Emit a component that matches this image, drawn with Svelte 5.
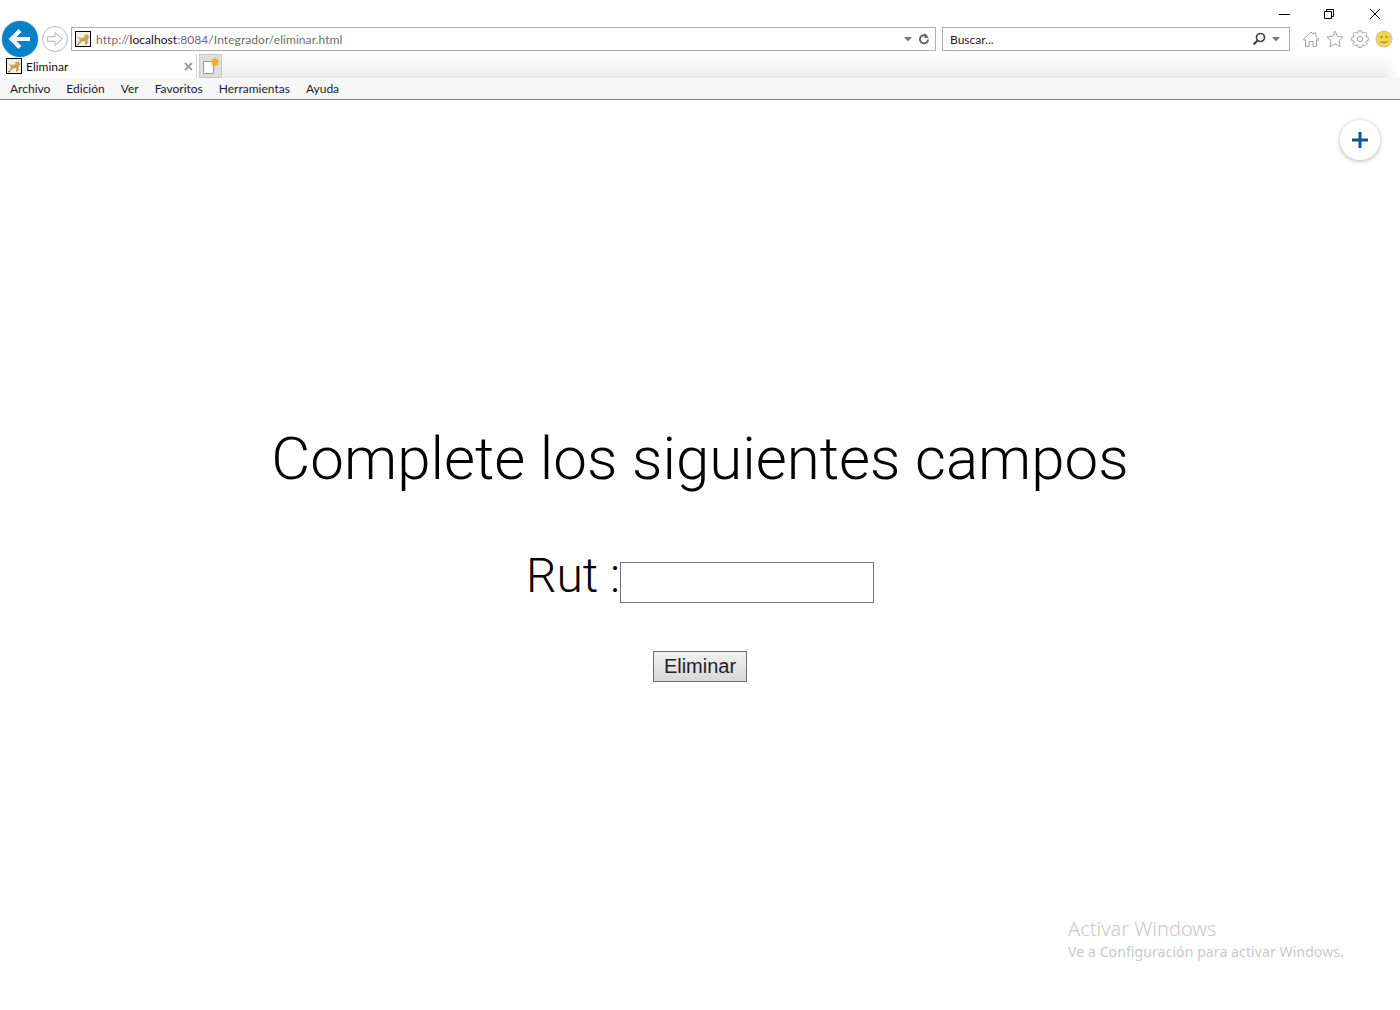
<script>
  const menu = ['Archivo', 'Edición', 'Ver', 'Favoritos', 'Herramientas', 'Ayuda'];

  // Outline of an eight-toothed cog, centred in an 18-unit box.
  function cogPath() {
    const teeth = 8;
    const pts = [];
    for (let i = 0; i < teeth; i++) {
      const a = (i / teeth) * Math.PI * 2;
      const step = (Math.PI * 2) / teeth;
      [[-0.5, 6.2], [-0.24, 8.4], [0.24, 8.4], [0.5, 6.2]].forEach(([f, r]) => {
        const t = a + f * step;
        pts.push(`${(9 + r * Math.cos(t)).toFixed(2)} ${(9 + r * Math.sin(t)).toFixed(2)}`);
      });
    }
    return 'M' + pts.join('L') + 'Z';
  }
  const cog = cogPath();
</script>

{#snippet cat()}
  <svg class="fav" viewBox="0 0 16 16" aria-hidden="true">
    <rect x="0.5" y="0.5" width="15" height="15" fill="#f1efe8" stroke="#000" />
    <path d="M2 5 L5 7 L9 6.500 L10 3 L11.500 4.500 L13 3 L14 7 L12.500 9 L13 12 L11 12 L9.500 10 L7 10.500 L4 13 L3 12 L5 9.500 L4 7.500 Z" fill="#cda257" />
    <path d="M2 14 L4 13 M10 13 L12 12.500" stroke="#7a6238" stroke-width="1" fill="none" />
  </svg>
{/snippet}

<div class="page">
  <header class="chrome">
    <div class="winbar">
      <svg class="winbtn min" viewBox="0 0 12 12" aria-hidden="true"><path d="M1 6.500h11" stroke="#000" fill="none" /></svg>
      <svg class="winbtn restore" viewBox="0 0 12 12" aria-hidden="true"><path d="M1.500 3.500h7v7h-7z M3.500 3.500v-2h7v7h-2" stroke="#000" fill="none" /></svg>
      <svg class="winbtn close" viewBox="0 0 12 12" aria-hidden="true"><path d="M1 1l10 10M11 1L1 11" stroke="#000" fill="none" /></svg>
    </div>

    <div class="navrow">
      <div class="back">
        <svg viewBox="0 0 36 36" aria-hidden="true"><path d="M28 18H10M18 9.500L9.500 18l8.500 8.500" stroke="#fff" stroke-width="4" fill="none" /></svg>
      </div>
      <div class="forward">
        <svg viewBox="0 0 26 26" aria-hidden="true"><path d="M5 10.500h8V6l8 7-8 7v-4.500H5z" stroke="#aaa" stroke-width="1" fill="#fff" /></svg>
      </div>
      <div class="address">
        {@render cat()}
        <span class="url">http://<b>localhost</b>:8084/Integrador/eliminar.html</span>
        <svg class="caret" viewBox="0 0 8 5" aria-hidden="true"><path d="M0 0h8L4 4.500z" fill="#777" /></svg>
        <svg class="refresh" viewBox="0 0 12 12" aria-hidden="true"><path d="M8.800 3.200A4.100 4.100 0 1 0 10.100 6.500" stroke="#666" stroke-width="2" fill="none" /><path d="M6.500 0v5h4.500z" fill="#666" /></svg>
      </div>
      <div class="search">
        <span class="placeholder">Buscar...</span>
        <svg class="loupe" viewBox="0 0 14 14" aria-hidden="true"><circle cx="8.500" cy="5.500" r="4" stroke="#444" stroke-width="1.700" fill="none" /><path d="M5.500 8.500L1.500 12.500" stroke="#444" stroke-width="2.200" /></svg>
        <svg class="caret" viewBox="0 0 8 5" aria-hidden="true"><path d="M0 0h8L4 4.500z" fill="#777" /></svg>
      </div>
      <div class="tools">
        <svg viewBox="0 0 18 18" aria-hidden="true"><path d="M1 9.500L9 2l2.500 2.300V3h2.500v3.600L17 9.500l-1 1-1.500-1.300V16.500h-3.500v-5h-4v5H3.500V9.200L2 10.500z" fill="#fff" stroke="#a3a3a3" /></svg>
        <svg viewBox="0 0 18 18" aria-hidden="true"><path d="M9 1l2.400 5.400 5.800.6-4.300 3.900 1.200 5.800L9 13.800l-5.100 2.900 1.200-5.800L.8 7l5.800-.6z" fill="#fff" stroke="#a3a3a3" /></svg>
        <svg viewBox="0 0 18 18" aria-hidden="true"><circle cx="9" cy="9" r="2.800" fill="none" stroke="#a3a3a3" /><path d={cog} fill="none" stroke="#a3a3a3" /></svg>
        <svg viewBox="0 0 18 18" aria-hidden="true"><circle cx="9" cy="9" r="8" fill="#f2d451" stroke="#c9c2a0" /><circle cx="6.500" cy="7" r="1" fill="#8a7a30" /><circle cx="11.500" cy="7" r="1" fill="#8a7a30" /><path d="M5.500 11c1.500 2 5.500 2 7 0" stroke="#8a7a30" fill="none" /></svg>
      </div>
    </div>

    <div class="tabrow">
      <div class="tab">
        {@render cat()}
        <span class="tabtitle">Eliminar</span>
        <svg class="tabclose" viewBox="0 0 9 9" aria-hidden="true"><path d="M1 1l7 7M8 1L1 8" stroke="#a0a0a0" stroke-width="2" fill="none" /></svg>
      </div>
      <div class="newtab">
        <svg viewBox="0 0 18 18" aria-hidden="true">
          <path d="M1.500 4.500h10v12h-10z" fill="#fff" stroke="#9a9a9a" />
          <path d="M13 0l1 2.500 2.500-1-1 2.500 2.500 1-2.500 1 1 2.500-2.500-1-1 2.500-1-2.500-2.500 1 1-2.500-2.500-1 2.500-1-1-2.500 2.500 1z" fill="#f5a623" />
        </svg>
      </div>
      <div class="tabfill"></div>
    </div>

    <nav class="menubar">
      {#each menu as item}
        <span>{item}</span>
      {/each}
    </nav>
  </header>

  <main class="content">
    <h1>Complete los siguientes campos</h1>
    <div class="field">
      <label for="rut">Rut :</label><input id="rut" type="text" />
    </div>
    <button type="button">Eliminar</button>
  </main>

  <button type="button" class="fab" aria-label="Añadir">
    <svg viewBox="0 0 16 16" aria-hidden="true"><path d="M8 0v16M0 8h16" stroke="#0b55a0" stroke-width="3" fill="none" /></svg>
  </button>

  <aside class="watermark">
    <div class="wm1">Activar Windows</div>
    <div class="wm2">Ve a Configuración para activar Windows.</div>
  </aside>
</div>

<style>
  :global(body) { margin: 0; background: #fff; }
  .page {
    position: relative;
    height: 1010px;
    overflow: hidden;
    font-family: Lato, "Noto Sans", sans-serif;
  }
  .chrome { display: flex; flex-direction: column; }
  .winbar { height: 27px; display: flex; }
  .winbtn { width: 12px; height: 12px; margin-top: 8px; }
  .min { margin-left: 1278px; }
  .restore { margin-left: 33px; width: 12px; }
  .close { margin-left: 34px; }

  .navrow { height: 24px; display: flex; align-items: center; }
  .back {
    width: 36px; height: 36px; border-radius: 50%;
    background: #0581c8; margin: 0 0 0 2px; flex: none;
    position: relative; z-index: 2;
    box-shadow: 0 0 0 1px #dfeaf2;
  }
  .back svg { display: block; width: 36px; height: 36px; }
  .forward {
    width: 24px; height: 24px; border-radius: 50%; border: 1px solid #bcbcbc;
    margin: 0 0 0 4px; flex: none; background: #fff;
  }
  .forward svg { display: block; width: 24px; height: 24px; }
  .address, .search {
    box-sizing: border-box; height: 24px; border: 1px solid #aeaeae;
    display: flex; align-items: center; font-size: 12px; background: #fff;
  }
  .address { width: 865px; margin-left: 3px; padding: 0 5px 0 3px; }
  .search { width: 348px; margin-left: 6px; padding: 0 9px 0 7px; }
  .fav { width: 16px; height: 16px; flex: none; display: block; }
  .url { color: #6d6d6d; margin-left: 5px; flex: 1; letter-spacing: 0.06px; }
  .url b { font-weight: 400; color: #111; }
  .caret { width: 8px; height: 5px; flex: none; }
  .refresh { width: 12px; height: 12px; margin-left: 6px; flex: none; }
  .placeholder { flex: 1; color: #222; }
  .loupe { width: 14px; height: 14px; margin-right: 6px; flex: none; }
  .tools { display: flex; margin-left: 12px; gap: 6.300px; }
  .tools svg { width: 18px; height: 18px; display: block; }

  .tabrow { height: 24px; margin-top: 3px; display: flex; }
  .tab {
    box-sizing: border-box; width: 197px; height: 24px; display: flex; align-items: center;
    background: #fff; padding: 0 3px 0 6px; border-right: 1px solid #d4d4d4;
    font-size: 12px; color: #111;
  }
  .tabtitle { flex: 1; margin-left: 4px; }
  .tabclose { width: 9px; height: 9px; flex: none; }
  .newtab {
    box-sizing: border-box; width: 23px; height: 24px; margin-left: 2px; background: #dedede;
    border: 1px solid #c8c8c8; display: flex; align-items: center; justify-content: center; flex: none;
  }
  .newtab svg { width: 18px; height: 18px; display: block; }
  .tabfill {
    flex: 1; height: 24px;
    background: linear-gradient(to bottom, #fff, #ececec);
    -webkit-mask-image: linear-gradient(to right, #000 98.500%, transparent);
    mask-image: linear-gradient(to right, #000 98.500%, transparent);
  }

  .menubar {
    box-sizing: border-box; height: 22px; background: #f6f6f6; border-bottom: 1px solid #808080;
    display: flex; align-items: center; gap: 16px; padding: 0 10px; font-size: 12px; color: #1a1a2a;
  }

  .content {
    display: flex; flex-direction: column; align-items: center;
    padding-top: 324px;
    font-family: Roboto, sans-serif; font-weight: 300; color: #000;
  }
  h1 { font-size: 60px; font-weight: 300; margin: 0; line-height: 70px; }
  .field { display: flex; align-items: flex-start; margin-top: 54px; }
  label { font-size: 48px; line-height: 56px; }
  input {
    box-sizing: border-box; width: 254px; height: 41px; border: 1px solid #767676;
    background: #fff; margin: 14px 0 0; padding: 0; border-radius: 0;
  }
  .content > button {
    box-sizing: border-box; width: 94px; height: 31px; margin-top: 47px; padding: 0;
    font-family: "Liberation Sans", Arial, sans-serif; font-size: 20px; color: #222;
    background: linear-gradient(to bottom, #f0f0f0, #d8d8d8); border: 1px solid #707070; border-radius: 0;
  }

  .fab {
    position: absolute; left: 1340px; top: 120px; width: 40px; height: 40px; border-radius: 50%;
    background: #fff; border: 0; padding: 0; box-shadow: 0 1px 5px rgba(0,0,0,.3);
    display: flex; align-items: center; justify-content: center;
  }
  .fab svg { width: 16px; height: 16px; display: block; }

  .watermark { position: absolute; left: 1068px; top: 915px; color: #c9c9c9; font-family: "Noto Sans", sans-serif; }
  .wm1 { font-size: 20px; line-height: 27px; font-weight: 300; }
  .wm2 { font-size: 14px; line-height: 19px; letter-spacing: 0.1px; }
</style>
